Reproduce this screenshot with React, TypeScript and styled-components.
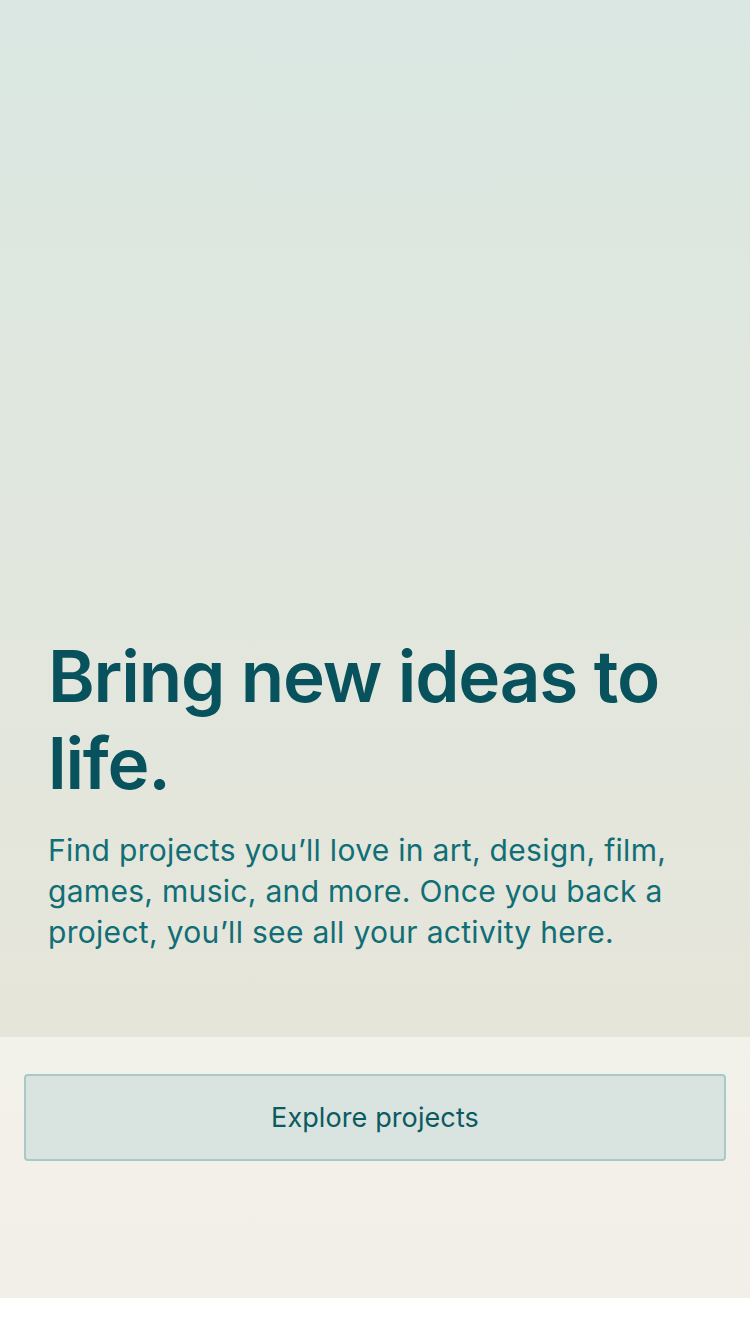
import React from "react";
import styled, { createGlobalStyle } from "styled-components";

const Global = createGlobalStyle`
  html, body { margin: 0; padding: 0; background: #ffffff; }
  body { font-family: Inter, "Noto Sans", sans-serif; -webkit-font-smoothing: antialiased; }
  * { box-sizing: border-box; }
`;

const Page = styled.div`
  width: 750px;
  display: flex;
  flex-direction: column;
`;

const Hero = styled.section`
  height: 1037px;
  background: linear-gradient(180deg, #dae7e2 0%, #e1e7de 50%, #e6e5da 100%);
  display: flex;
  flex-direction: column;
  justify-content: flex-end;
  padding: 0 48px 84px 48px;
`;

const Title = styled.h1`
  margin: 0 0 23px 0;
  font-family: Inter, sans-serif;
  font-weight: 600;
  font-size: 71px;
  line-height: 87px;
  letter-spacing: -1.2px;
  color: #07525c;
`;

const Body = styled.p`
  margin: 0;
  font-family: Inter, sans-serif;
  font-weight: 400;
  font-size: 30px;
  line-height: 41px;
  letter-spacing: 0.3px;
  color: #0f6e76;
`;

const Footer = styled.section`
  height: 261px;
  background: linear-gradient(180deg, #f2f1ea 0%, #f2efe8 100%);
  padding: 37px 24px 0 24px;
`;

const Button = styled.button`
  width: 100%;
  height: 87px;
  border: 2px solid #a9c9c9;
  border-radius: 4px;
  background: #d9e3df;
  font-family: Inter, sans-serif;
  font-size: 27px;
  font-weight: 400;
  letter-spacing: 0.1px;
  color: #0b5a60;
  cursor: pointer;
`;

export default function App() {
  return (
    <Page>
      <Global />
      <Hero>
        <Title>Bring new ideas to life.</Title>
        <Body>
          Find projects you’ll love in art, design, film, games, music, and more. Once you back a
          project, you’ll see all your activity here.
        </Body>
      </Hero>
      <Footer>
        <Button>Explore projects</Button>
      </Footer>
    </Page>
  );
}
